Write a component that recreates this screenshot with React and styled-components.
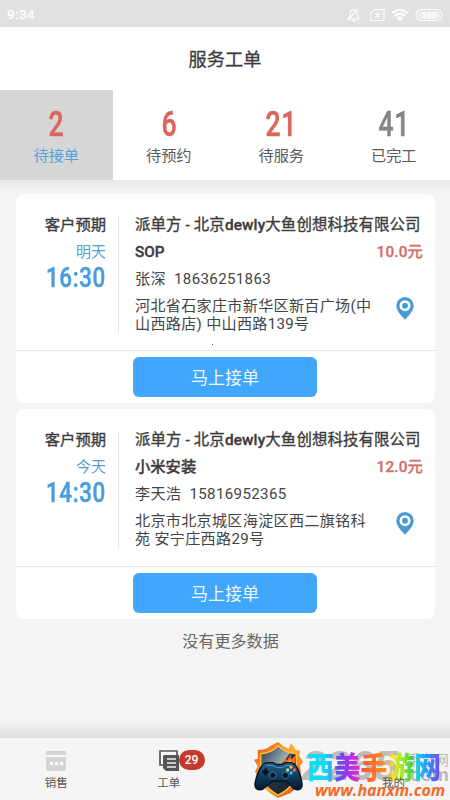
import React from "react";
import styled, { createGlobalStyle } from "styled-components";

const Global = createGlobalStyle`
  *{box-sizing:border-box}
  body{margin:0;background:#f4f4f4;font-family:Roboto,"Noto Sans CJK SC",sans-serif;color:#3c3c3c}
`;
const Screen = styled.div`width:450px;height:800px;display:flex;flex-direction:column;overflow:hidden;background:#f4f4f4;`;
const StatusBar = styled.div`height:27px;flex:none;background:#e1e1e1;color:#fff;display:flex;align-items:center;justify-content:space-between;padding:2px 7px 0;font:500 13.5px/25px Roboto,sans-serif;letter-spacing:.4px;`;
const StatusIcons = styled.div`display:flex;align-items:center;`;
const Header = styled.header`height:63px;flex:none;background:#fff;text-align:center;font-size:18.2px;line-height:66px;-webkit-text-stroke:.3px #3c3c3c;`;
const Tabs = styled.nav`height:90px;flex:none;display:grid;grid-template-columns:repeat(4,1fr);background:#fff;`;
const Tab = styled.div`background:${p => p.$active ? "#d6d6d6" : "#fff"};color:${p => p.$active ? "#55a3dc" : "#5a5a5a"};text-align:center;padding-top:16px;`;
const Count = styled.div`font:500 35px/38px Roboto,sans-serif;color:${p => p.$done ? "#858585" : "#dc6458"};transform:scaleX(.76);-webkit-text-stroke:.5px;letter-spacing:.8px;`;
const TabLabel = styled.div`font-size:15.2px;line-height:22px;margin-top:1px;`;
const List = styled.main`flex:1;padding:14px 15px 0 16px;display:flex;flex-direction:column;gap:6px;background:linear-gradient(#e7e7e7,#f4f4f4 10px);`;
const Card = styled.article`height:${p => p.$h}px;flex:none;background:#fff;border-radius:8px;`;
const Details = styled.div`height:${p => p.$h}px;border-bottom:1px solid #e5e5e5;display:flex;padding-top:23px;`;
const When = styled.div`width:103px;height:116px;border-right:1px solid #e3e3e3;padding-right:12px;text-align:right;`;
const Expected = styled.div`font-size:15.3px;line-height:18px;margin-top:-1px;white-space:nowrap;-webkit-text-stroke:.35px #3c3c3c;`;
const Day = styled.div`font-size:15px;line-height:20px;margin-top:8px;color:#559fd0;`;
const Hour = styled.div`font:500 28px/32px Roboto,sans-serif;color:#4b9ddd;transform:scaleX(.8);transform-origin:right;-webkit-text-stroke:.5px;letter-spacing:.8px;`;
const Body = styled.div`flex:1;min-width:0;padding-left:16px;`;
const Company = styled.div`font-size:15.4px;line-height:18px;white-space:nowrap;-webkit-text-stroke:.35px #3c3c3c;margin-top:-1px;letter-spacing:.13px;`;
const Latin = styled.span`font-weight:500;`;
const Service = styled.div`display:flex;justify-content:space-between;font-size:15.3px;line-height:20px;margin-top:8px;padding-right:12px;-webkit-text-stroke:.35px;`;
const Price = styled.span`color:#d4706b;font-weight:500;letter-spacing:.15px;`;
const Contact = styled.div`font-size:15.1px;line-height:20px;margin-top:7px;white-space:pre;letter-spacing:.34px;color:#444;`;
const AddressRow = styled.div`display:flex;justify-content:space-between;margin-top:8px;padding-right:21px;`;
const Address = styled.div`font-size:15.1px;line-height:18px;white-space:pre;letter-spacing:.3px;color:#444;`;
const Action = styled.button`display:block;width:184px;height:40px;margin:6px auto 0 117px;border:0;border-radius:6px;background:#40a7fc;color:#eefaff;font:17px/42px Roboto,"Noto Sans CJK SC",sans-serif;padding:0;`;
const Empty = styled.div`text-align:center;font-size:16.1px;line-height:24px;margin-top:5px;padding-left:10px;color:#666;`;
const Shade = styled.div`height:16px;flex:none;background:linear-gradient(#f4f4f4,#dfdfdf);`;
const Bottom = styled.footer`height:62px;flex:none;position:relative;display:grid;grid-template-columns:repeat(4,1fr);background:#f5f5f5;`;
const NavItem = styled.div`display:flex;flex-direction:column;align-items:center;padding-top:12px;font-size:11.5px;line-height:16px;color:#555;position:relative;`;
const NavIcon = styled.svg`width:22px;height:22px;margin-bottom:3px;`;
const Badge = styled.span`position:absolute;left:66px;top:12px;width:26px;height:20px;border-radius:10px;background:#c63a2b;color:#fff;text-align:center;font:500 12px/20px Roboto,sans-serif;`;
const Watermark = styled.div`position:absolute;left:253px;top:2px;width:197px;height:60px;overflow:hidden;`;
const Ghost = styled.div`position:absolute;left:49px;top:4px;white-space:nowrap;color:#bdbdbd;font:italic 700 43px/42px "Liberation Sans",sans-serif;`;
const GhostWords = styled.div`position:absolute;right:1px;top:12px;color:#b9b9b9;text-align:right;font:400 14px/16px "Liberation Sans","Noto Sans CJK SC",sans-serif;`;
const GhostDomain = styled.div`font-size:19px;font-weight:700;line-height:14px;`;
const Shield = styled.svg`position:absolute;left:0;top:1px;`;
const Brand = styled.div`position:absolute;left:54px;top:10px;white-space:nowrap;font:900 26.8px/32px "Noto Sans CJK SC",sans-serif;transform:scaleY(1.1);color:transparent;background:linear-gradient(90deg,#10dcfa 0 14%,#409bf5 19%,#624ded 23%,#b02eef 32%,#e52cc6 39%,#ff5a35 42%,#ff8c25 58%,#ffe01c 64%,#a8ed20 70%,#43d43c 78%,#18c9f4 83%,#2397fa 90%,#8042f2);background-clip:text;`;
const Url = styled.div`position:absolute;left:62px;top:41px;white-space:nowrap;color:#f26b2b;font:italic 700 16px/18px "Open Sans","Noto Sans",sans-serif;`;
const Mine = styled.span`position:absolute;left:382px;top:37px;font-size:11.5px;line-height:16px;color:#555;`;
const Speck = styled.i`position:absolute;left:212px;top:344px;width:1px;height:1px;background:#555577;`;

const tabs = [[2, "待接单"], [6, "待预约"], [21, "待服务"], [41, "已完工"]];
const orders = [
  { day: "明天", time: "16:30", service: "SOP", price: "10.0元", contact: "张深  18636251863", address: "河北省石家庄市新华区新百广场(中\n山西路店) 中山西路139号", h: 209, dh: 157 },
  { day: "今天", time: "14:30", service: "小米安装", price: "12.0元", contact: "李天浩  15816952365", address: "北京市北京城区海淀区西二旗铭科\n苑 安宁庄西路29号", h: 210, dh: 158 },
];

function StatusGlyphs() {
  return (
    <StatusIcons>
      <svg width="98" height="16" viewBox="0 0 98 16" fill="none" stroke="#fff" strokeWidth="1.1">
        <path d="M3 12h11l-1.6-2.5V6.3c0-2-1.3-3.4-3.5-3.4S5.3 4.3 5.3 6.3v3.2L3 12ZM2 14 13 2M7 13.3q2 1.4 3.5 0" />
        <path d="M29.5 2.5H39v11H25.5v-7ZM30 6l4.5 4.5M34.5 6 30 10.5" />
        <path d="M47 6.2q8-6.5 16 0M49.5 9q5.5-4.5 11 0M52 11.4q3-2.5 6 0" strokeWidth="1.9" />
        <path d="m53 12 2 2.3 2-2.3q-2-1.4-4 0Z" fill="#fff" stroke="none" />
        <rect x="71" y="2.5" width="26" height="11" rx="5.5" />
        <rect x="73" y="4.5" width="22" height="7" rx="3.5" fill="#ededed" stroke="none" />
        <text x="84" y="11.6" fill="#fff" stroke="none" textAnchor="middle" fontSize="9" fontWeight="700" fontFamily="Roboto" letterSpacing="0">100</text>
      </svg>
    </StatusIcons>
  );
}

function Pin() {
  return (
    <svg width="18" height="23" viewBox="0 0 18 23">
      <path fill="#489bd2" fillRule="evenodd" d="M9 0a8.7 8.7 0 0 1 8.7 8.7c0 4.5-3.8 8.7-8.7 14-4.9-5.3-8.7-9.5-8.7-14A8.7 8.7 0 0 1 9 0Zm0 3.2a5.5 5.5 0 1 0 0 11 5.5 5.5 0 0 0 0-11Z" />
      <circle cx="9" cy="8.7" r="2.9" fill="#489bd2" />
    </svg>
  );
}

function GameShield() {
  return (
    <Shield width="52" height="59" viewBox="0 0 54 60" preserveAspectRatio="none">
      <defs>
        <linearGradient id="flame" x2="1" y2="1"><stop stopColor="#e84c1c" /><stop offset=".48" stopColor="#ffb229" /><stop offset="1" stopColor="#d63d11" /></linearGradient>
        <linearGradient id="steel" x2="1" y2="1"><stop stopColor="#21323d" /><stop offset=".47" stopColor="#9aafb9" /><stop offset=".5" stopColor="#26343d" /><stop offset="1" stopColor="#101b26" /></linearGradient>
        <linearGradient id="pad" x2="0" y2="1"><stop stopColor="#25638c" /><stop offset=".5" stopColor="#123c61" /><stop offset="1" stopColor="#08192e" /></linearGradient>
      </defs>
      <path fill="url(#flame)" d="M26 1q5 5 11 7 3-4 1-6 5 3 6 7l5 1-1 5 4 6-3 4 1 12q-4 11-11 16L26 58Q11 51 6 38L2 31l3-5-4-7 4-1V9q9 0 13-4Z" />
      <path d="M26 5q8 7 19 8v19c0 11-9 18-19 23C15 49 8 42 8 31V13q11-1 18-8Z" fill="url(#steel)" stroke="#ffbd41" strokeWidth="1.5" />
      <path d="M29 23l5-6 1 3 5-7-1 6 6-5-2 10Z" fill="#ff6922" />
      <path d="M35 24l4-6v5l4-2-4 5Z" fill="#ffcf3d" />
      <path d="M14 22h7l3 2h6l3-2h7c6 1 10 14 11 22 0 7-7 7-11 2l-5-5H20l-6 5C9 51 2 51 2 44c1-8 6-21 12-22Z" fill="url(#pad)" stroke="#07172a" strokeWidth="1.5" />
      <path d="M14 25h7l3 2h7l3-2h5" fill="none" stroke="#4d92b9" />
      <path d="M13 28v7M9.5 31.5h7" stroke="#061525" strokeWidth="2.8" />
      <g fill="#071626" stroke="#397b9e"><circle cx="20.5" cy="35" r="3.4" /><circle cx="33.5" cy="35" r="3.4" /></g>
      <circle cx="39.5" cy="26.5" r="1.7" fill="#ffc42f" /><circle cx="43" cy="29.5" r="1.7" fill="#fc653f" /><circle cx="39.5" cy="32.5" r="1.7" fill="#42bae2" /><circle cx="36" cy="29.5" r="1.7" fill="#bfd4cd" />
    </Shield>
  );
}

export default function App() {
  return (
    <Screen>
      <Global />
      <StatusBar><span>9:34</span><StatusGlyphs /></StatusBar>
      <Header>服务工单</Header>
      <Tabs>{tabs.map(([n, label], i) => <Tab key={label} $active={i === 0}><Count $done={i === 3}>{n}</Count><TabLabel>{label}</TabLabel></Tab>)}</Tabs>
      <List>
        {orders.map(o => (
          <Card key={o.time} $h={o.h}>
            <Details $h={o.dh}>
              <When><Expected>客户预期</Expected><Day>{o.day}</Day><Hour>{o.time}</Hour></When>
              <Body>
                <Company>派单方 - 北京<Latin>dewly</Latin>大鱼创想科技有限公司</Company>
                <Service><Latin>{o.service}</Latin><Price>{o.price}</Price></Service>
                <Contact>{o.contact}</Contact>
                <AddressRow><Address>{o.address}</Address><Pin /></AddressRow>
              </Body>
            </Details>
            <Action>马上接单</Action>
          </Card>
        ))}
        <Empty>没有更多数据</Empty>
      </List>
      <Speck />
      <Shade />
      <Bottom>
        <NavItem>
          <NavIcon viewBox="0 0 22 22"><path d="M2 1h18q1 0 1 1v3H1V2q0-1 1-1ZM1 7h20v12q0 2-2 2H3q-2 0-2-2Z" fill="#d5d5d5" /><path d="M5 12h3v3H5Zm5 0h3v3h-3Zm5 0h3v3h-3Z" fill="#fff" /></NavIcon>销售
        </NavItem>
        <NavItem>
          <NavIcon viewBox="0 0 22 22"><path d="M5 15H2V1h17v4" fill="none" stroke="#555" strokeWidth="1.7" /><path d="M6 5h15v16H8l-3-3V6Z" fill="#555" /><path d="M9 9h9M9 13h9M9 17h9" stroke="#f1f1f1" strokeWidth="1.5" /></NavIcon>工单<Badge>29</Badge>
        </NavItem>
        <Watermark><Ghost>2265</Ghost><GhostWords>手游网<GhostDomain>.com</GhostDomain></GhostWords><GameShield /><Brand>西美手游网</Brand><Url>www.hanxm.com</Url></Watermark>
        <Mine>我的</Mine>
      </Bottom>
    </Screen>
  );
}
